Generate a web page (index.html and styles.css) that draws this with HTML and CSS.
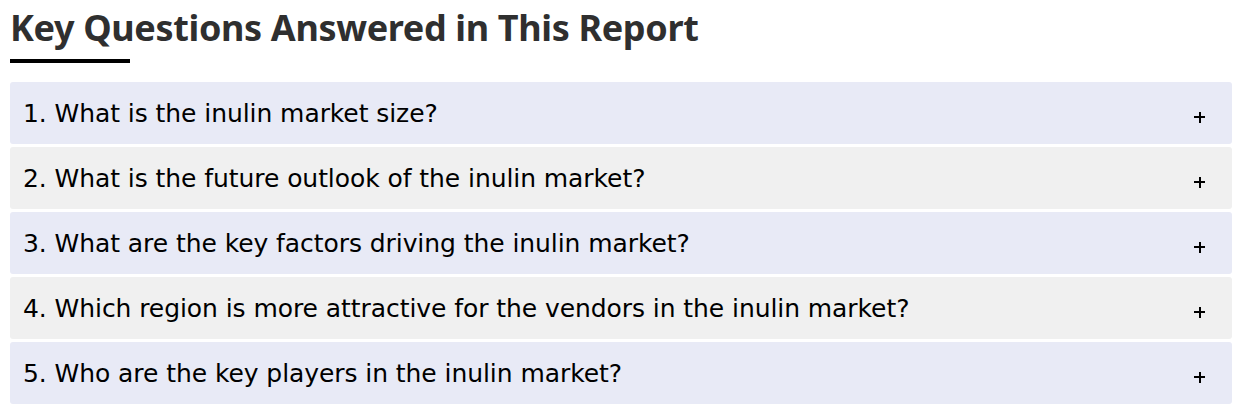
FILE: index.html
```html
<!DOCTYPE html>
<html lang="en">
<head>
<meta charset="utf-8">
<title>Key Questions Answered in This Report</title>
<link rel="stylesheet" href="styles.css">
</head>
<body>
<section class="faq">
  <h2 class="faq-title">Key Questions Answered in This Report</h2>
  <div class="faq-bar"></div>
  <div class="faq-list">
    <div class="faq-item alt-a"><span class="q">1. What is the inulin market size?</span><span class="plus"></span></div>
    <div class="faq-item alt-b"><span class="q">2. What is the future outlook of the inulin market?</span><span class="plus"></span></div>
    <div class="faq-item alt-a"><span class="q">3. What are the key factors driving the inulin market?</span><span class="plus"></span></div>
    <div class="faq-item alt-b"><span class="q">4. Which region is more attractive for the vendors in the inulin market?</span><span class="plus"></span></div>
    <div class="faq-item alt-a"><span class="q">5. Who are the key players in the inulin market?</span><span class="plus"></span></div>
  </div>
</section>
</body>
</html>
```
FILE: styles.css
```css
html, body {
  margin: 0;
  padding: 0;
  background: #ffffff;
}
body {
  font-family: "Noto Sans", "Noto Sans CJK JP", sans-serif;
}
.faq {
  padding: 0 16px 0 10px;
}
.faq-title {
  margin: 0;
  padding-top: 5px;
  font-size: 36px;
  line-height: 46px;
  font-weight: 700;
  color: #2f2f2f;
  letter-spacing: -0.35px;
}
.faq-bar {
  width: 120px;
  height: 4px;
  background: #000;
  margin-top: 8px;
}
.faq-list {
  margin-top: 19px;
  display: flex;
  flex-direction: column;
  gap: 3px;
}
.faq-item {
  height: 62px;
  display: flex;
  align-items: center;
  justify-content: space-between;
  padding: 0 27px 0 13px;
  border-radius: 3px;
}
.alt-a { background: #e8eaf6; }
.alt-b { background: #f0f0f0; }
.q {
  font-family: "DejaVu Sans", sans-serif;
  font-size: 25px;
  color: #000;
  letter-spacing: -0.07px;
}
.plus {
  position: relative;
  width: 11px;
  height: 11px;
  margin-top: 8px;
  flex: none;
}
.plus::before, .plus::after {
  content: "";
  position: absolute;
  background: #000;
}
.plus::before {
  left: 0;
  right: 0;
  top: 4.5px;
  height: 2px;
}
.plus::after {
  top: 0;
  bottom: 0;
  left: 4.5px;
  width: 2.5px;
}
```
